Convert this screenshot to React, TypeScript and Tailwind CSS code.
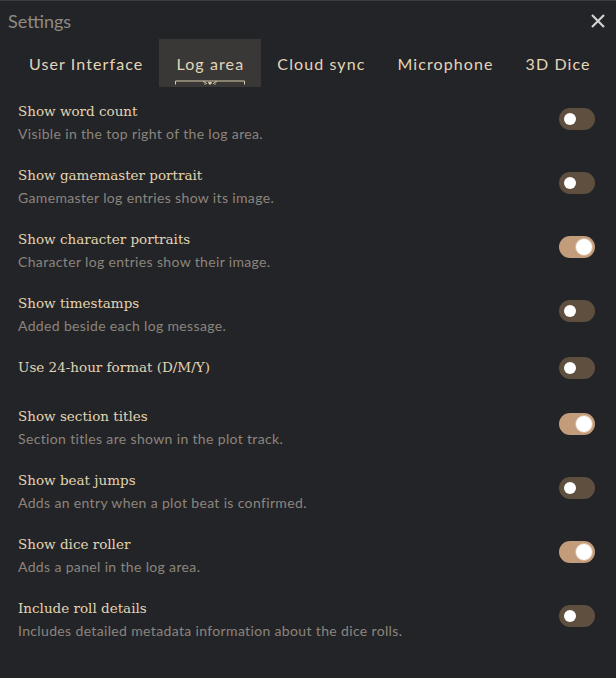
import React from "react";

type Row = { label: string; desc?: string; on: boolean };

const rows: Row[] = [
  { label: "Show word count", desc: "Visible in the top right of the log area.", on: false },
  { label: "Show gamemaster portrait", desc: "Gamemaster log entries show its image.", on: false },
  { label: "Show character portraits", desc: "Character log entries show their image.", on: true },
  { label: "Show timestamps", desc: "Added beside each log message.", on: false },
  { label: "Use 24-hour format (D/M/Y)", on: false },
  { label: "Show section titles", desc: "Section titles are shown in the plot track.", on: true },
  { label: "Show beat jumps", desc: "Adds an entry when a plot beat is confirmed.", on: false },
  { label: "Show dice roller", desc: "Adds a panel in the log area.", on: true },
  { label: "Include roll details", desc: "Includes detailed metadata information about the dice rolls.", on: false },
];

const tabs = ["User Interface", "Log area", "Cloud sync", "Microphone", "3D Dice"];

function Ornament() {
  return (
    <svg width="70" height="6" viewBox="0 0 70 6" className="block">
      <path d="M0.5 4.5 L0.5 1 L69.5 1 L69.5 4.5" fill="none" stroke="#d8cba8" strokeWidth="1" />
      <path d="M28 1.5 Q31 2 32 4 M42 1.5 Q39 2 38 4" fill="none" stroke="#d8cba8" strokeWidth="1" />
      <path d="M33 2 L37 2 L36 4.5 L34 4.5 Z" fill="#d8cba8" />
      <circle cx="30" cy="4" r="0.7" fill="#d8cba8" />
      <circle cx="40" cy="4" r="0.7" fill="#d8cba8" />
    </svg>
  );
}

function Toggle({ on }: { on: boolean }) {
  return on ? (
    <div className="w-[36px] h-[22px] rounded-full bg-[#c39c7c] flex items-center justify-end pr-[2px]">
      <div className="w-[18px] h-[18px] rounded-full bg-white border border-[#d9b89a]" />
    </div>
  ) : (
    <div className="w-[36px] h-[22px] rounded-full bg-[#5f4f3e] flex items-center pl-[5px]">
      <div className="w-[12px] h-[12px] rounded-full bg-white" />
    </div>
  );
}

export default function App() {
  return (
    <div className="w-[616px] h-[678px] bg-[#232428] border-t border-[#3c3c3c] overflow-hidden">
      <div className="flex items-center justify-between h-[38px]">
        <div className="pl-[8px] text-[18px] leading-[22px] text-[#8f8a84] pt-[1px]" style={{ fontFamily: "Lato, 'Noto Sans', sans-serif" }}>
          Settings
        </div>
        <svg width="14" height="14" viewBox="0 0 14 14" className="mr-[11px] mt-[1px]">
          <path d="M1 1 L13 13 M13 1 L1 13" stroke="#d2d2d2" strokeWidth="2.2" />
        </svg>
      </div>
      <div className="flex pl-[13px] h-[48px]" style={{ fontFamily: "Lato, 'Noto Sans', sans-serif" }}>
        {tabs.map((t) => {
          const active = t === "Log area";
          return (
            <div
              key={t}
              className={`flex flex-col items-center px-[16px] pt-[14px] ${active ? "bg-[#3a3837]" : ""}`}
            >
              <div className="text-[16px] leading-[22px] tracking-[1.1px] text-[#e3d6b8] whitespace-nowrap">{t}</div>
              {active && (
                <div className="mt-[5px]">
                  <Ornament />
                </div>
              )}
            </div>
          );
        })}
      </div>
      <div className="pl-[18px] pr-[21px]">
        {rows.map((r) => (
          <div
            key={r.label}
            className={`flex items-center justify-between ${r.desc ? "h-[64px]" : "h-[49px]"}`}
          >
            <div className="self-start pt-[15px]">
              <div className="text-[13.5px] leading-[18px] text-[#e2d4b2]" style={{ fontFamily: "'DejaVu Serif', serif" }}>
                {r.label}
              </div>
              {r.desc && (
                <div className="mt-[5px] text-[14px] leading-[18px] tracking-[0.35px] text-[#8c857c]" style={{ fontFamily: "Lato, 'Noto Sans', sans-serif" }}>
                  {r.desc}
                </div>
              )}
            </div>
            <Toggle on={r.on} />
          </div>
        ))}
      </div>
    </div>
  );
}
